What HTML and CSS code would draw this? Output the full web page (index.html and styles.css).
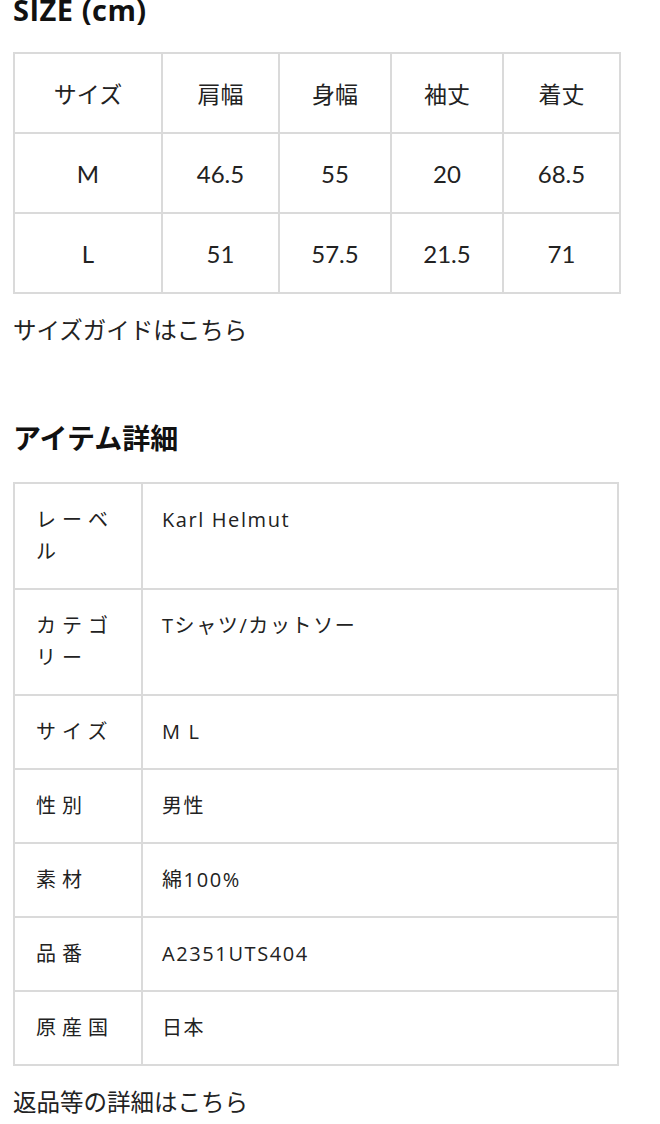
FILE: index.html
```html
<!DOCTYPE html>
<html lang="ja">
  <head>
    <meta charset="UTF-8" />
    <title>SIZE / アイテム詳細</title>
    <meta name="viewport" content="width=device-width, initial-scale=1.0" />
    <link rel="stylesheet" href="styles.css">
  </head>
  <body>
    <div class="container">
      <h2 class="size-title">SIZE (cm)</h2>
      <table class="size-table">
        <colgroup>
          <col style="width: 148px" />
          <col style="width: 117px" />
          <col style="width: 112px" />
          <col style="width: 112px" />
          <col style="width: 117px" />
        </colgroup>
        <thead>
          <tr>
            <th>サイズ</th>
            <th>肩幅</th>
            <th>身幅</th>
            <th>袖丈</th>
            <th>着丈</th>
          </tr>
        </thead>
        <tbody>
          <tr>
            <td>M</td>
            <td>46.5</td>
            <td>55</td>
            <td>20</td>
            <td>68.5</td>
          </tr>
          <tr>
            <td>L</td>
            <td>51</td>
            <td>57.5</td>
            <td>21.5</td>
            <td>71</td>
          </tr>
        </tbody>
      </table>
      <p class="link-text">サイズガイドはこちら</p>

      <h2 class="detail-title">アイテム詳細</h2>
      <table class="detail-table">
        <colgroup>
          <col class="label-col" />
          <col />
        </colgroup>
        <tbody>
          <tr>
            <th>レーベル</th>
            <td>Karl Helmut</td>
          </tr>
          <tr>
            <th>カテゴリー</th>
            <td>Tシャツ/カットソー</td>
          </tr>
          <tr>
            <th>サイズ</th>
            <td>M L</td>
          </tr>
          <tr>
            <th>性別</th>
            <td>男性</td>
          </tr>
          <tr>
            <th>素材</th>
            <td>綿100%</td>
          </tr>
          <tr>
            <th>品番</th>
            <td>A2351UTS404</td>
          </tr>
          <tr>
            <th>原産国</th>
            <td>日本</td>
          </tr>
        </tbody>
      </table>
      <p class="link-text">返品等の詳細はこちら</p>
    </div>
  </body>
</html>
```

FILE: styles.css
```css
body {
  margin: 0;
  font-family: 'Open Sans', 'Noto Sans CJK JP', sans-serif;
  background: #ffffff;
  color: #222;
}

.container {
  width: 606px;
  padding-left: 13px;
}

h2 {
  margin: 0;
  font-weight: bold;
  color: #111;
}

.size-title {
  font-size: 29px;
  line-height: 32px;
  letter-spacing: 0.5px;
  margin-top: -6px;
}

table {
  border-collapse: collapse;
  width: 606px;
  table-layout: fixed;
}

th,
td {
  border: 2px solid #dadada;
  font-weight: normal;
}

.size-table {
  margin-top: 26px;
}

.size-table th,
.size-table td {
  height: 78px;
  padding: 0;
  text-align: center;
  font-size: 23px;
  font-family: 'Lato', 'Noto Sans CJK JP', sans-serif;
}

.size-table td {
  font-size: 24px;
}

.link-text {
  margin: 0;
  font-size: 23.5px;
  line-height: 32px;
}

.size-table + .link-text {
  margin-top: 20px;
}

.detail-title {
  font-size: 28px;
  line-height: 36px;
  margin-top: 74px;
}

.detail-table {
  margin-top: 26px;
}

.label-col {
  width: 128px;
}

.detail-table th,
.detail-table td {
  padding: 20px 19px;
  text-align: left;
  vertical-align: top;
  font-size: 20px;
  line-height: 32px;
}

.detail-table th {
  letter-spacing: 0.3em;
  padding-left: 21px;
}

.detail-table td {
  letter-spacing: 0.08em;
}

.detail-table + .link-text {
  margin-top: 20px;
}
```
